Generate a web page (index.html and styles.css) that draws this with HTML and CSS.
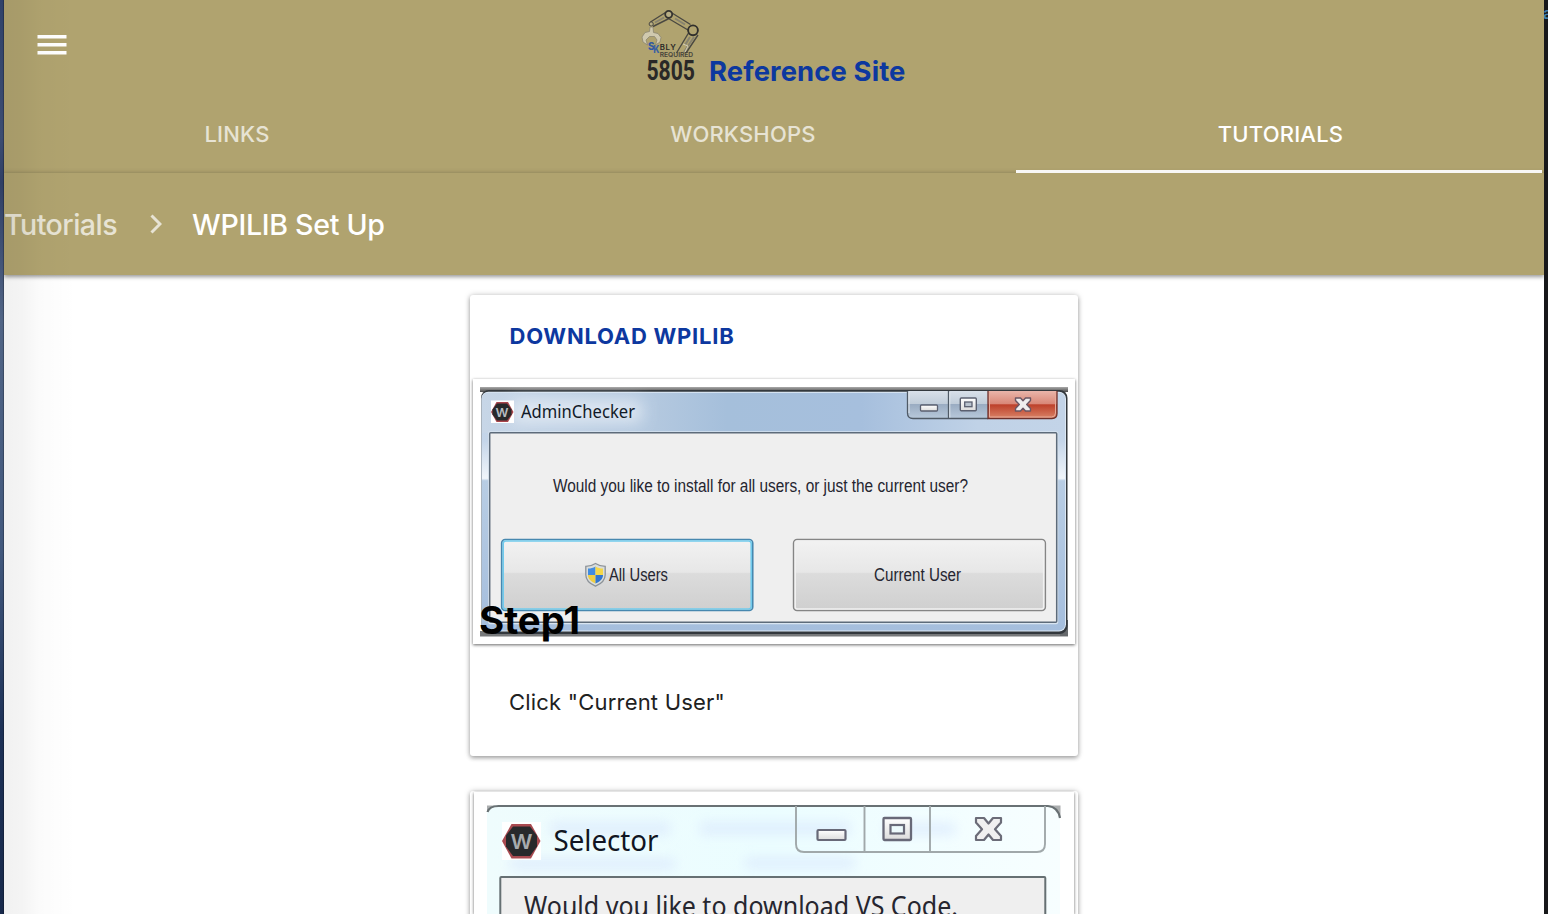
FILE: index.html
```html
<!DOCTYPE html>
<html lang="en">
<head>
<meta charset="utf-8">
<title>Reference Site</title>
<link rel="stylesheet" href="styles.css">
</head>
<body>
<div class="edge-left"></div>
<div class="page">
  <header class="topbar">
    <div class="brand-row">
      <svg class="menu" viewBox="0 0 30 20"><path d="M.5 0h29v3.500H.5zM.5 8h29v3.500H.5zM.5 16h29v3.500H.5z" fill="#fff"/></svg>
      <div class="brand">
        <svg class="logo" viewBox="636 4 70 80">
          <g fill="none" stroke="#4b4942" stroke-width="1.400">
            <path d="M650.500 22L665.500 12.500M653 26.500L669 18.500M672 13L690.500 24.500M668.500 18.500L688 30M688.500 33L676.500 53M698 35L686 53"/>
            <path d="M655 22.500l9-5M675 18.500l10 6M694 37l-10 15M690 37l-5 8" stroke="#88836f" stroke-width="2"/>
            <path d="M683 44l5 2-3 6" stroke="#d5ceb5" stroke-width="1"/>
            <circle cx="668.700" cy="14.300" r="3.500" fill="#b8ae85" stroke="#35332f" stroke-width="1.800"/>
            <circle cx="693" cy="30.300" r="4.900" fill="#b0a36f" stroke="#302f2c" stroke-width="1.900"/>
            <circle cx="651.200" cy="24" r="2.100" fill="#b8ae85" stroke-width="1"/>
          </g>
          <path d="M650 27h3l.5 5.500 4.500 1 3 4-1 4.500-4.500 3 1.500-5-2.500-3.500h-5l-3.500 3.500 1.500 5-4.500-3-1-5 3-4.500 4.500-1z" fill="#d0c9ae" stroke="#8c8671" stroke-width=".8"/>
          <g class="logo-text">
            <text x="648" y="49.500" font-size="10" font-weight="800" fill="#3258a0" textLength="6.500" lengthAdjust="spacingAndGlyphs">S</text>
            <text x="653.300" y="52.500" font-size="10" font-weight="800" fill="#3b60a3" textLength="6.200" lengthAdjust="spacingAndGlyphs">K</text>
            <text x="659.700" y="49.800" font-size="7.800" font-weight="600" textLength="16">BLY</text>
            <text x="659.700" y="57" font-size="6.500" font-weight="600" fill="#45423a" textLength="33.500" lengthAdjust="spacingAndGlyphs">REQUIRED</text>
            <text class="team" x="646.500" y="79.700" font-size="27.500" font-weight="700" textLength="48.500" lengthAdjust="spacingAndGlyphs">5805</text>
          </g>
        </svg>
        <span class="brand-name">Reference Site</span>
      </div>
    </div>
    <nav class="tabs">
      <a class="tab tab-links">LINKS</a>
      <a class="tab tab-workshops">WORKSHOPS</a>
      <a class="tab tab-tutorials active">TUTORIALS</a>
    </nav>
  </header>
  <nav class="crumbs">
    <span class="crumb">Tutorials</span>
    <svg class="chevron" viewBox="0 0 12 20"><path d="M1.500 1.500L10 10l-8.500 8.500" fill="none" stroke="#e7e3d4" stroke-width="3"/></svg>
    <span class="crumb current">WPILIB Set Up</span>
  </nav>
  <main class="cards">
    <article class="card">
      <div class="card-action">DOWNLOAD WPILIB</div>
      <div class="card-image">
        <svg class="shot" viewBox="473 379 602 265">
          <defs>
            <linearGradient id="glass"><stop offset="0" stop-color="#c7d6e7"/><stop offset=".3" stop-color="#b3c8df"/><stop offset=".42" stop-color="#a5bfdb"/><stop offset=".65" stop-color="#a6bfdd"/><stop offset=".85" stop-color="#c0d2e7"/><stop offset="1" stop-color="#c3d4e8"/></linearGradient>
            <linearGradient id="side" x2="0" y2="1"><stop offset="0" stop-color="#bfd2e8"/><stop offset=".2" stop-color="#c4d5e9"/><stop offset=".36" stop-color="#f0f5fa"/><stop offset=".37" stop-color="#b8cde4"/><stop offset="1" stop-color="#a5bedd"/></linearGradient>
            <linearGradient id="topedge" x2="0" y2="1"><stop offset="0" stop-color="#aaa"/><stop offset="1" stop-color="#4b4b4b"/></linearGradient>
            <linearGradient id="ctl" x2="0" y2="1"><stop offset="0" stop-color="#d8e0e9"/><stop offset=".48" stop-color="#c0ccd9"/><stop offset=".5" stop-color="#9aacc2"/><stop offset="1" stop-color="#b7c8da"/></linearGradient>
            <linearGradient id="red" x2="0" y2="1"><stop offset="0" stop-color="#e9b5aa"/><stop offset=".47" stop-color="#d98777"/><stop offset=".5" stop-color="#bd402a"/><stop offset="1" stop-color="#d98468"/></linearGradient>
            <linearGradient id="btn" x2="0" y2="1"><stop offset="0" stop-color="#f2f2f2"/><stop offset=".46" stop-color="#e7e7e7"/><stop offset=".48" stop-color="#dcdcdc"/><stop offset="1" stop-color="#cfcfcf"/></linearGradient>
            <linearGradient id="glyph" x2="0" y2="1"><stop offset="0" stop-color="#fff"/><stop offset="1" stop-color="#dcdcdc"/></linearGradient>
            <filter id="soft" x="-30%" y="-80%" width="160%" height="260%"><feGaussianBlur stdDeviation="8"/></filter>
          </defs>
          <rect x="480" y="387" width="588" height="5" fill="url(#topedge)"/>
          <rect x="480" y="631" width="588" height="5.500" fill="#77797b"/>
          <rect x="1060" y="620" width="8" height="16" fill="#66696c"/>
          <rect x="481" y="390" width="586.500" height="244" rx="8" fill="#33383d"/>
          <rect x="481.300" y="391.800" width="584.700" height="239.700" rx="7" fill="#dce8f4"/>
          <rect x="482" y="392.800" width="583" height="237.700" rx="6" fill="url(#side)"/>
          <path d="M488.500 393H1059q6 0 6 6v34H482v-34q0-6 6.500-6z" fill="url(#glass)"/>
          <rect x="512" y="400" width="130" height="23" fill="#edf3f9" opacity=".7" filter="url(#soft)"/>
          <rect x="488.200" y="431.200" width="570" height="193" rx="2" fill="#d9e5f1"/>
          <rect x="489.700" y="432.700" width="567" height="189.600" rx="1" fill="#efefef" stroke="#5d6b7a" stroke-width="1.500"/>
          <rect x="491" y="400.500" width="23" height="22.500" fill="#fff"/>
          <path d="M496.500 402h11.500l5.500 10-5.500 10h-11.500l-5.500-10z" fill="#a9444b"/><path d="M497 403.500h10l4.500 6v5l-4.500 6h-10l-4.500-6v-5z" fill="#28292b"/>
          <text x="495.500" y="416.500" font-size="12" font-weight="600" fill="#b8bcc0" font-family="Inter, sans-serif" textLength="13" lengthAdjust="spacingAndGlyphs">W</text>
          <text x="521" y="417.500" font-size="17.500" fill="#111a28" font-family="'Noto Sans', sans-serif" textLength="114" lengthAdjust="spacingAndGlyphs">AdminChecker</text>
          <path d="M907.500 391v22q0 5 5 5H988v-27z" fill="url(#ctl)"/>
          <path d="M988 391v27.500h64q5 0 5-5V391z" fill="url(#red)"/>
          <path d="M907.500 391v22q0 5.500 5.500 5.500h75M948.500 391v27" fill="none" stroke="#4f5a66" stroke-width="1.300"/>
          <path d="M949.800 392v25.500M909 392v21" stroke="#dfe6ed" stroke-width="1"/>
          <path d="M988 391v27.500h64q5 0 5-5V391" fill="none" stroke="#6d302b" stroke-width="1.300"/>
          <path d="M989.500 392v25h62q4 0 4-4v-21" fill="none" stroke="#e7aa99" stroke-width="1"/>
          <rect x="920.500" y="405" width="17" height="6" rx="1" fill="url(#glyph)" stroke="#5b6070" stroke-width="1.300"/>
          <rect x="960.300" y="398" width="16" height="12.700" rx="1" fill="url(#glyph)" stroke="#5b6070" stroke-width="1.400"/><rect x="964.700" y="402" width="7.300" height="4.700" fill="#bac4cf" stroke="#5b6070" stroke-width="1.300"/>
          <path d="M1015.500 398h5l2.500 2.800 2.500-2.800h5v2.500l-3.800 4 3.800 4v2.500h-5l-2.500-2.800-2.500 2.800h-5v-2.500l3.800-4-3.800-4z" fill="#f0eeee" stroke="#6b5663" stroke-width="1.400" stroke-linejoin="round"/>
          <g class="dialog-text">
            <text x="553" y="491.500" textLength="415" lengthAdjust="spacingAndGlyphs">Would you like to install for all users, or just the current user?</text>
          </g>
          <rect x="501.700" y="539.500" width="251" height="71" rx="3.500" fill="url(#btn)" stroke="#4788af" stroke-width="1.700"/>
          <rect x="503.200" y="541" width="248" height="68" rx="2.500" fill="none" stroke="#71cbed" stroke-width="1.600"/>
          <rect x="793.600" y="539.500" width="251.700" height="71" rx="3.500" fill="url(#btn)" stroke="#858585" stroke-width="1.600"/>
          <rect x="795.200" y="541" width="248.500" height="68" rx="2" fill="none" stroke="#f1f1f1" stroke-width="1.600"/>
          <path d="M595.500 563.500c3 2 6 2.700 9.700 2.900v8.300c0 6-5 9.500-9.700 11.500-4.700-2-9.700-5.500-9.700-11.500v-8.300c3.700-.2 6.700-.9 9.700-2.900z" fill="#d9dddd" stroke="#8c9298" stroke-width="1.300"/>
          <path d="M595.500 566.500V575H588v-6.500c3 0 5-.5 7.500-2z" fill="#408be0"/><path d="M595.500 566.500V575h7.500v-6.500c-3 0-5-.5-7.500-2z" fill="#f4d748"/><path d="M595.500 575v8.500c-4.500-2-7.500-4.500-7.500-8.500z" fill="#efce43"/><path d="M595.500 575v8.500c4.500-2 7.500-4.500 7.500-8.500z" fill="#3276cf"/>
          <g class="dialog-text">
            <text x="609" y="580.700" textLength="59" lengthAdjust="spacingAndGlyphs">All Users</text>
            <text x="874" y="580.700" textLength="87" lengthAdjust="spacingAndGlyphs">Current User</text>
          </g>
        </svg>
        <span class="card-title">Step1</span>
      </div>
      <div class="card-content">Click "Current User"</div>
    </article>
    <article class="card card-next">
      <div class="card-image image-next">
        <svg class="shot-next" viewBox="474 792 600 122">
          <defs>
            <linearGradient id="pale"><stop offset="0" stop-color="#effcfd"/><stop offset=".5" stop-color="#ebfdff"/><stop offset="1" stop-color="#f7feff"/></linearGradient>
            <filter id="haze" x="-20%" y="-100%" width="140%" height="300%"><feGaussianBlur stdDeviation="6"/></filter>
          </defs>
          <path d="M487 811q3-6 11-6h549q11 0 13 12v97H487z" fill="url(#pale)"/>
          <g fill="#ddebfd" filter="url(#haze)" opacity=".8"><rect x="550" y="822" width="120" height="13"/><rect x="510" y="858" width="165" height="12"/><rect x="700" y="822" width="150" height="13"/><rect x="745" y="857" width="110" height="12"/><rect x="885" y="823" width="70" height="12"/></g>
          <path d="M487.500 812q2-6 11-6H1048q10 1 12 12" fill="none" stroke="#697174" stroke-width="2.200"/>
          <path d="M487 812v-6.500h9q-7 1-9 6.500zM1048 805.500h12.500V818q-2-10-12.500-12.500z" fill="#666c6e" opacity=".55"/>
          <rect x="500.300" y="877" width="545" height="50" rx="1" fill="#efefef" stroke="#667073" stroke-width="2"/>
          <rect x="502" y="822" width="39" height="38" fill="#fff"/>
          <path d="M511.500 824h19.500l9.500 17-9.500 17.500h-19.500L502 841z" fill="#a94a50"/><path d="M513 826.500h17l7 9v11l-7 9.500h-17l-7-9.500v-11z" fill="#28292b"/>
          <text x="510.500" y="848.500" font-size="20" font-weight="600" fill="#a7abad" font-family="Inter, sans-serif" textLength="22" lengthAdjust="spacingAndGlyphs">W</text>
          <text x="553.500" y="850.500" font-size="29" fill="#111523" font-family="'Noto Sans', sans-serif" textLength="105" lengthAdjust="spacingAndGlyphs">Selector</text>
          <path d="M796 806v38q0 8 8 8h233q8 0 8-8v-38M864.500 806v46M930 806v46" fill="none" stroke="#a0a8aa" stroke-width="1.900"/>
          <rect x="817.500" y="830" width="28" height="10" rx="1" fill="url(#glyph)" stroke="#686978" stroke-width="2.200"/>
          <rect x="883.500" y="818" width="27.500" height="22" rx="1" fill="url(#glyph)" stroke="#686978" stroke-width="2.300"/><rect x="890.500" y="825" width="13.500" height="8.500" fill="#edfafc" stroke="#686978" stroke-width="2.200"/>
          <path d="M976 818h8l4.500 5.500 4.500-5.500h8v4.500l-6 6.700 6 6.800v4h-8l-4.500-5.500L984 840h-8v-4l6-6.800-6-6.700z" fill="#f0f0f0" stroke="#6b6c78" stroke-width="2.200" stroke-linejoin="round"/>
          <text x="524" y="915.500" font-size="26.500" fill="#26262f" font-family="'Noto Sans', sans-serif" textLength="434" lengthAdjust="spacingAndGlyphs">Would you like to download VS Code.</text>
        </svg>
      </div>
    </article>
  </main>
  <div class="side-shade"></div>
</div>
<div class="edge-right"><span class="edge-text">a</span></div>
</body>
</html>
```

FILE: styles.css
```css
* { box-sizing: border-box; }
body {
  margin: 0;
  height: 914px;
  display: flex;
  overflow: hidden;
  font-family: Inter, "Liberation Sans", sans-serif;
  color: #212121;
}
.edge-left {
  width: 4px;
  background: linear-gradient(90deg, transparent 60%, rgba(0,0,0,.35)), linear-gradient(#30426a, #3c4d72 15%, #303f65 20%, #516586 35%, #42597e 60%, #1d3157 80%, #182a4c);
}
.edge-right {
  width: 4px;
  overflow: hidden;
  background: #17181a;
}
.edge-text {
  display: block;
  margin: 4px 0 0 -1px;
  font-size: 16px;
  line-height: 18px;
  font-weight: 600;
  color: #3f7fae;
}
.page {
  position: relative;
  width: 1540px;
  height: 914px;
  overflow: hidden;
  background: #fff;
}
.topbar, .crumbs { background: #b0a36f; }
.topbar {
  height: 173px;
  box-shadow: inset 0 -5px 5px -4px rgba(0,0,0,.1);
}
.brand-row {
  display: grid;
  grid-template-columns: 632px 1fr;
  height: 96px;
}
.menu {
  width: 30px;
  height: 20px;
  margin: 35px 0 0 33px;
}
.brand { display: flex; }
.logo {
  width: 70px;
  height: 80px;
  margin-top: 4px;
}
.logo-text { font-family: Inter, sans-serif; fill: #292827; }
.team { font-family: Roboto, sans-serif; }
.brand-name {
  margin: 54px 0 0 3px;
  font-size: 27.400px;
  line-height: 34px;
  font-weight: 700;
  letter-spacing: .12px;
  color: #0d389f;
}
.tabs { display: flex; height: 77px; }
.tab {
  display: flex;
  justify-content: center;
  padding-top: 23px;
  font-size: 22px;
  line-height: 30px;
  font-weight: 450;
  letter-spacing: .18px;
  color: #e7e3d4;
}
.tab-links { width: 466px; }
.tab-workshops { width: 546px; }
.tab-tutorials { width: 526px; padding-left: 3px; }
.active { color: #fff; border-bottom: 3px solid #f8f7f5; }
.crumbs {
  display: flex;
  align-items: flex-start;
  height: 102px;
  padding-top: 34px;
  font-size: 28.600px;
  line-height: 36px;
  font-weight: 450;
  box-shadow: 0 2px 4px rgba(0,0,0,.4);
}
.crumb {
  width: 146px;
  letter-spacing: -.55px;
  white-space: nowrap;
  color: #e7e3d4;
}
.chevron { width: 12px; height: 20px; margin-top: 7px; }
.current {
  width: auto;
  margin-left: 30px;
  letter-spacing: -.3px;
  color: #fff;
}
.cards {
  width: 608px;
  margin: 20px 0 0 466px;
}
.card {
  height: 461px;
  border-radius: 3px;
  background: #fff;
  box-shadow: 0 2px 4px rgba(0,0,0,.3), 0 0 6px rgba(0,0,0,.18);
}
.card-action {
  height: 84px;
  padding: 26px 39.500px;
  font-size: 22px;
  line-height: 30px;
  font-weight: 700;
  letter-spacing: .75px;
  color: #0d389f;
}
.card-image {
  position: relative;
  width: 602px;
  height: 265px;
  margin: 0 3px;
  background: #fff;
  box-shadow: 0 1px 3px rgba(0,0,0,.6);
}
.shot, .shot-next { display: block; width: 100%; height: 100%; }
.dialog-text {
  font-family: "Liberation Sans", sans-serif;
  font-size: 17.500px;
  fill: #252530;
}
.card-title {
  position: absolute;
  left: 6px;
  bottom: 1px;
  font-size: 38.400px;
  line-height: 46px;
  font-weight: 700;
  color: #000;
}
.card-content {
  padding: 43px 39px;
  font-size: 22px;
  line-height: 30px;
  letter-spacing: .2px;
}
.card-next { margin-top: 35px; height: 240px; padding-top: 1px; }
.image-next { width: 600px; height: 122px; margin: 0 4px; }
.side-shade {
  position: absolute;
  inset: 0 auto 0 0;
  width: 72px;
  background: linear-gradient(90deg, rgba(0,0,0,.055), rgba(0,0,0,.043) 25%, rgba(0,0,0,.015) 50%, transparent);
}
```
